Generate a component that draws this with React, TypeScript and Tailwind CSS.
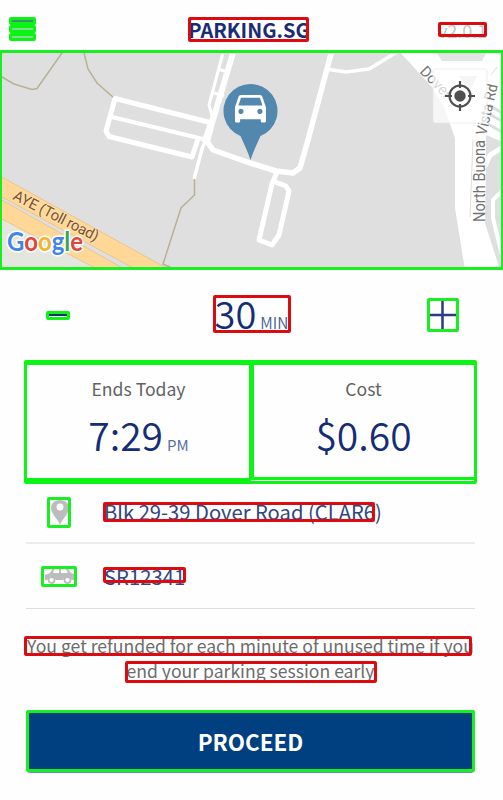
import React from "react";

const FONT = "font-['Noto_Sans_CJK_SC','Noto_Sans',sans-serif]";

function Header() {
  return (
    <header className="flex h-[50px] items-start justify-between pt-[15px] pr-[16px] pl-[11px]">
      <div className="flex w-[49px] flex-col gap-[6px] pt-[5px]">
        <span className="h-[2px] w-[24px] bg-[#3f8f78]" />
        <span className="h-[2px] w-[24px] bg-[#7fdc8c]" />
        <span className="h-[2px] w-[24px] bg-[#7fdc8c]" />
      </div>
      <h1 className="text-[20px] leading-[30px] font-bold whitespace-nowrap text-[#182b76]">PARKING.SG</h1>
      <span className="w-[49px] text-right text-[18px] leading-[30px] whitespace-nowrap text-[#c4c4c4]">v2.0.1</span>
    </header>
  );
}

function ParkingMap() {
  return (
    <svg className="block h-[220px] w-[503px]" viewBox="0 50 503 220">
      <rect x="0" y="50" width="503" height="220" fill="#dfdfdf" />
      <path d="M0 218L98 270H0Z" fill="#e5e7df" />
      <path d="M0 176L170 270H137L0 196Z M0 199L126 270H99L0 218Z" fill="#ffd797" stroke="#e9c58e" strokeWidth="1" />
      <g fill="none" stroke="#b8b293" strokeWidth="1.500">
        <path d="M2 77L14 84L32 89.500L37 88.500L62 53" />
        <path d="M84 53L88 69L97 83L114 98" />
        <path d="M194.500 179V195L181 208L163 264L172 268" />
      </g>
      <g fill="none" stroke="#fff" strokeLinejoin="round">
        <path d="M212 123L115 98.500L106 131L109 136.500L192 157L198 139" strokeWidth="5" />
        <path d="M112 117L203 139" strokeWidth="4" />
        <path d="M233 53L212 123L202 149L194 179" strokeWidth="3.500" />
        <path d="M233 53L212 123L207 142" strokeWidth="6" />
        <path d="M223 53L209 105L212 116L203 142M218 69L228 72M214 93L224 96" strokeWidth="3" />
        <path d="M206 140L213 150L250 163L276 171L293 173L300 168L308 140L332 50" strokeWidth="5.500" />
        <path d="M326 69L346 72L369 69L397 52" strokeWidth="3.500" />
        <path d="M277 172L272 184L259 240L272 245L279 235L289 191L286 186L275 182" strokeWidth="5" />
      </g>
      <path d="M398 50H503V142L486 135V173L485 223L500 270H465L455 208V138L444 107L432 87Z" fill="#fff" />
      <path d="M435 50H488L482 61H442Z" fill="#e4e4e4" />
      <path d="M459 76H477L469 93Z" fill="#dcdcdc" />
      <g fill="none" stroke="#fff">
        <path d="M485 166L490 155L502 148" strokeWidth="5" />
        <path d="M502 191L493 200V218L502 255" strokeWidth="4" />
      </g>
      <g fill="none" stroke="#dddddd">
        <path d="M489 105L502 113M489 114L502 121M488 124L502 132" strokeWidth="3" />
        <path d="M473 140L470 217" strokeWidth="1" />
        <path d="M491 75L497 67" strokeWidth="1" />
      </g>
      <g className="font-[Roboto,sans-serif]" fontSize="15">
        <text transform="translate(419 72) rotate(46)" fill="#777">Dover</text>
        <text transform="translate(485 222) rotate(-90)" fill="#737373" fontSize="16" textLength="82" lengthAdjust="spacingAndGlyphs">North Buona</text>
        <text transform="translate(486 136) rotate(-77)" fill="#737373" fontSize="15" textLength="52" lengthAdjust="spacingAndGlyphs">Vista Rd</text>
        <text transform="translate(12 199) rotate(27)" fill="#79522f" stroke="#ffe4b8" strokeWidth="1.500" paintOrder="stroke" textLength="94">AYE (Toll road)</text>
      </g>
      <path d="M250.500 160C248 152 244 144 240.500 136A27 27 0 1 1 260.500 136C257 144 253 152 250.500 160Z" fill="#5287ae" />
      <g transform="translate(229.800 86.500) scale(1.720)">
        <path fill="#fff" d="M18.920 6.010C18.720 5.420 18.160 5 17.500 5h-11c-.66 0-1.210.42-1.420 1.010L3 12v8c0 .55.45 1 1 1h1c.55 0 1-.45 1-1v-1h12v1c0 .55.45 1 1 1h1c.55 0 1-.45 1-1v-8l-2.080-5.990zM6.500 16c-.83 0-1.500-.67-1.500-1.500S5.670 13 6.500 13s1.500.67 1.500 1.500S7.330 16 6.500 16zm11 0c-.83 0-1.500-.67-1.500-1.500s.67-1.500 1.500-1.500 1.500.67 1.500 1.500-.67 1.500-1.500 1.500zM5 11l1.500-4.500h11L19 11H5z" />
      </g>
      <rect x="433" y="69" width="54" height="54" rx="2" fill="#fff" fillOpacity=".72" stroke="#e5e5e5" strokeOpacity=".7" />
      <g fill="none" stroke="#505050" strokeWidth="2.200">
        <circle cx="460" cy="96" r="10.500" />
        <path d="M460 81V88M460 104V111M445 96H452M468 96H475" />
      </g>
      <circle cx="460" cy="96" r="5.700" fill="#505050" />
      <text x="7" y="251" className="font-[Lato,sans-serif] font-bold" fontSize="26" textLength="76" lengthAdjust="spacingAndGlyphs" stroke="#fff" strokeWidth="3" paintOrder="stroke">
        <tspan fill="#4285e8">G</tspan>
        <tspan fill="#df473b">o</tspan>
        <tspan fill="#efb52f">o</tspan>
        <tspan fill="#4285e8">g</tspan>
        <tspan fill="#39a65a">l</tspan>
        <tspan fill="#df473b">e</tspan>
      </text>
    </svg>
  );
}

function Stepper() {
  return (
    <section className="flex h-[90px] items-center justify-between pr-[47px] pl-[49px]">
      <span className="h-[2px] w-[18px] bg-[#17306f]" />
      <div className="flex items-baseline gap-[4px] pb-[5px] pl-[8px] text-[#142d75]">
        <span className="text-[38px] leading-[50px] font-[350]">30</span>
        <span className="text-[15.5px] font-[350] text-[#435d91]">MIN</span>
      </div>
      <svg className="h-[28px] w-[28px]" viewBox="0 0 28 28">
        <path d="M14.500 0V28M0 14H28" stroke="#293d80" strokeWidth="2.500" />
      </svg>
    </section>
  );
}

function Summary({ label, value, unit }: { label: string; value: string; unit?: string }) {
  return (
    <div className="flex flex-1 flex-col items-center pt-[14px]">
      <span className="text-[17.6px] leading-[30px] text-[#626262]">{label}</span>
      <div className="flex items-baseline gap-[4px] pt-[5px] text-[#142d75]">
        <span className="text-[39px] leading-[50px] font-[350]">{value}</span>
        {unit && <span className="text-[15px] text-[#5a70a0]">{unit}</span>}
      </div>
    </div>
  );
}

function Details() {
  return (
    <section className="mr-[28px] ml-[26px]">
      <div className="flex h-[60px] items-center border-b-2 border-[#ededed] pl-[24px] text-[20.2px] text-[#30467e]">
        <svg className="h-[26px] w-[20px]" viewBox="0 0 20 26">
          <path fillRule="evenodd" d="M10 25C8 19 1 14 1 8C1 3 5 0 10 0S19 3 19 8C19 14 12 19 10 25ZM10 3.500A3.500 3.500 0 1 0 10 10.500A3.500 3.500 0 1 0 10 3.500Z" fill="#bbbdbd" />
        </svg>
        <span className="pb-[3px] pl-[34px] leading-[30px] whitespace-nowrap">Blk 29-39 Dover Road (CLAR6)</span>
      </div>
      <div className="flex h-[65px] items-center border-b border-[#dedede] pl-[18px] text-[20.3px] text-[#30467e]">
        <svg className="h-[18px] w-[32px]" viewBox="0 0 32 18">
          <path fill="#bbbdbd" fillRule="evenodd" d="M1 8L6 6L9 1Q10 0 12 0H20Q22 0 24 2L27 6L30 7L31 13H28A5 5 0 0 0 19 13H12A5 5 0 0 0 3 13H1ZM9 6H15V1.500H12Q10 1.500 9 6ZM17 6H24Q22 1.500 20 1.500H17Z" />
          <circle cx="7.500" cy="13" r="3" fill="none" stroke="#bbbdbd" strokeWidth="1.800" />
          <circle cx="23.500" cy="13" r="3" fill="none" stroke="#bbbdbd" strokeWidth="1.800" />
        </svg>
        <span className="pl-[28px] leading-[30px]">SR12341</span>
      </div>
    </section>
  );
}

function Marks() {
  return (
    <div className="pointer-events-none absolute inset-0 *:absolute *:rounded-[2px] *:border-3">
      <i className="top-[17px] left-[9px] h-[8px] w-[27px] border-[#0cf416]" />
      <i className="top-[25px] left-[9px] h-[8px] w-[27px] border-[#0cf416]" />
      <i className="top-[33px] left-[9px] h-[8px] w-[27px] border-[#0cf416]" />
      <i className="top-[17px] left-[188px] h-[25px] w-[121px] border-[#dd0b0f]" />
      <i className="top-[22px] left-[438px] h-[15px] w-[49px] border-[#dd0b0f]" />
      <i className="top-[50px] -left-px h-[220px] w-[505px] border-[#18ee22]" />
      <i className="top-[311px] left-[46px] h-[9px] w-[24px] border-[#0cf416]" />
      <i className="top-[295px] left-[213px] h-[38px] w-[78px] border-[#dd0b0f]" />
      <i className="top-[298px] left-[427px] h-[34px] w-[32px] border-[#18ee22]" />
      <i className="top-[360px] left-[24px] h-[124px] w-[453px] border-[#0cf416]" />
      <i className="top-[362px] left-[24px] h-[119px] w-[228px] border-[#0cf416]" />
      <i className="top-[362px] left-[251px] h-[118px] w-[226px] border-[#0cf416]" />
      <i className="top-[497px] left-[47px] h-[31px] w-[24px] border-[#18ee22]" />
      <i className="top-[502px] left-[103px] h-[20px] w-[272px] border-[#dd0b0f]" />
      <i className="top-[566px] left-[41px] h-[21px] w-[36px] border-[#18ee22]" />
      <i className="top-[567px] left-[103px] h-[16px] w-[83px] border-[#dd0b0f]" />
      <i className="top-[636px] left-[24px] h-[20px] w-[448px] border-[#dd0b0f]" />
      <i className="top-[661px] left-[125px] h-[22px] w-[252px] border-[#dd0b0f]" />
      <i className="top-[710px] left-[26px] h-[62px] w-[449px] border-[#18ee22]" />
    </div>
  );
}

export default function App() {
  return (
    <main className={`relative h-[800px] w-[503px] overflow-hidden bg-[#fefefe] ${FONT}`}>
      <Header />
      <ParkingMap />
      <Stepper />
      <section className="mr-[27px] ml-[26px] flex h-[124px]">
        <Summary label="Ends Today" value="7:29" unit="PM" />
        <Summary label="Cost" value="$0.60" />
      </section>
      <Details />
      <p className="pt-[24px] pr-[2px] text-center text-[17.6px] leading-[25px] whitespace-nowrap text-[#6c6c6c]">
        You get refunded for each minute of unused time if you
        <br />
        end your parking session early
      </p>
      <button className="mt-[28px] mr-[29px] ml-[27px] flex h-[60px] w-[447px] items-center justify-center rounded-[3px] bg-[#004080] pt-[2px] text-[22.4px] font-bold text-white shadow-[0_2px_1px_#6884a0]">
        PROCEED
      </button>
      <Marks />
    </main>
  );
}
